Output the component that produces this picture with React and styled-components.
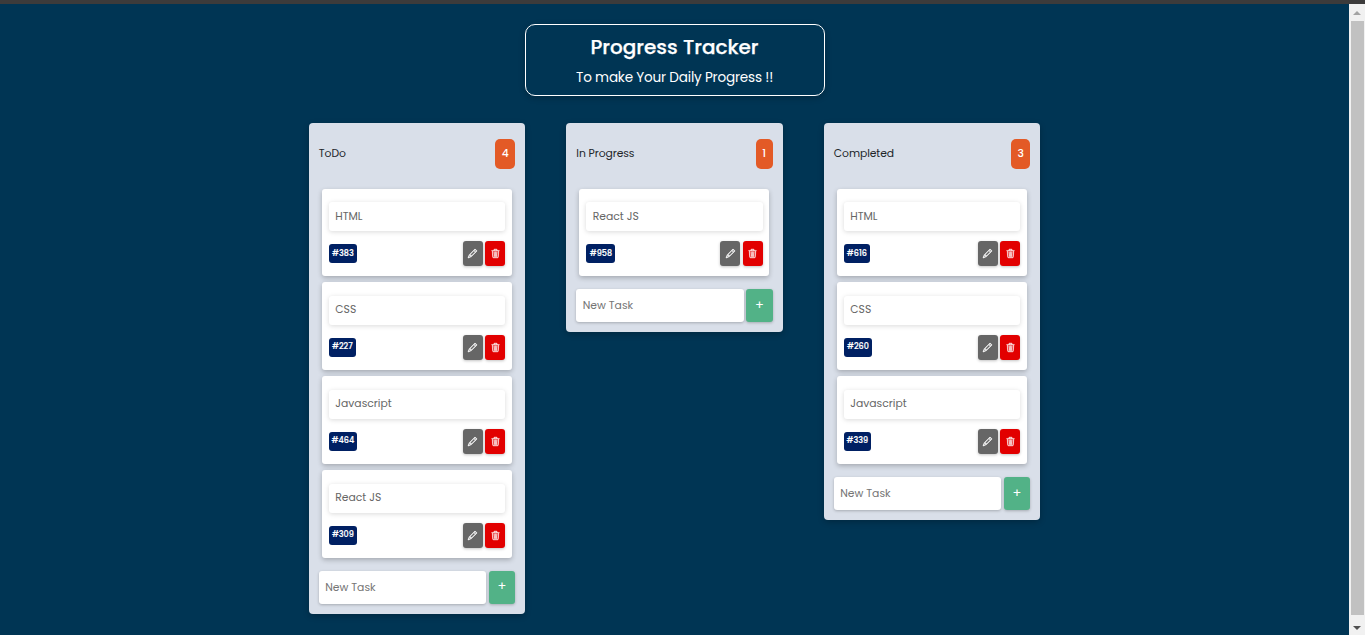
import React from "react";
import styled, { createGlobalStyle } from "styled-components";
import { BsPencil, BsTrash3 } from "react-icons/bs";

const GlobalStyle = createGlobalStyle`
  * { box-sizing: border-box; }
  html, body { margin: 0; padding: 0; overflow: hidden; background: #003554; }
  body, input, button { font-family: Poppins, Inter, "Open Sans", sans-serif; }
`;

const Screen = styled.div`
  height: 635px;
  display: flex;
  flex-direction: column;
  overflow: hidden;
  background: #003554;
`;

const TopEdge = styled.div`
  height: 4px;
  flex: none;
  background: #3c3b3b;
`;

const Viewport = styled.div`
  flex: 1;
  min-height: 0;
  display: flex;
`;

const Page = styled.main`
  flex: 1;
  display: flex;
  flex-direction: column;
  align-items: center;
  padding-top: 20px;
`;

const Header = styled.header`
  width: 300px;
  height: 72px;
  flex: none;
  margin-left: 1px;
  border: 1px solid #fff;
  border-radius: 10px;
  box-shadow: 0 2px 6px rgba(0, 0, 0, 0.24);
  color: #fff;
  text-align: center;
`;

const Title = styled.h1`
  margin: 7px 0 0;
  padding-right: 1px;
  font-size: 20px;
  line-height: 30px;
  font-weight: 500;
  -webkit-text-stroke: 0.25px currentColor;
  white-space: nowrap;
`;

const Subtitle = styled.p`
  margin: 5px 0 0;
  padding-right: 1px;
  font-size: 13.6px;
  line-height: 22px;
  letter-spacing: -0.2px;
  white-space: nowrap;
`;

const Board = styled.section`
  display: grid;
  grid-template-columns: repeat(3, 216.3px);
  column-gap: 41.2px;
  align-items: start;
  margin-top: 27px;
`;

const Column = styled.section`
  background: #d9dfe9;
  border-radius: 4px;
  padding: 16px 10px 10px;
  box-shadow: 0 2px 6px rgba(0, 0, 0, 0.24);
`;

const ColumnHead = styled.div`
  height: 30px;
  display: flex;
  align-items: center;
  justify-content: space-between;
  margin-bottom: 19.6px;
`;

const ColumnName = styled.h2`
  margin: 0;
  font-size: 10.8px;
  line-height: 16px;
  font-weight: 400;
  letter-spacing: -0.08px;
  color: #212529;
`;

const Count = styled.span`
  width: ${(p) => p.$width}px;
  height: 30px;
  display: flex;
  align-items: center;
  justify-content: center;
  padding-bottom: 1px;
  border-radius: 5px;
  background: #e35a26;
  color: #fff;
  font-size: 10.8px;
  line-height: 16px;
  font-weight: 500;
`;

const CardList = styled.div`
  display: grid;
  row-gap: 6.1px;
  padding: 0 3.2px 0 3px;
`;

const Card = styled.article`
  height: 87.7px;
  padding: 13.6px 6.8px 0 7px;
  border-radius: 3px;
  background: #fff;
  box-shadow: 0 2px 5px rgba(0, 0, 0, 0.24);
`;

const TaskName = styled.div`
  height: 29.3px;
  display: flex;
  align-items: center;
  padding: 0 6.4px 0.6px;
  border-radius: 3px;
  background: #fff;
  color: #666;
  font-size: 10.8px;
  line-height: 16px;
  box-shadow: 0 1px 5px rgba(0, 0, 0, 0.15);
`;

const CardFoot = styled.div`
  display: flex;
  align-items: center;
  justify-content: space-between;
  margin-top: 9.7px;
  height: 25px;
`;

const Tag = styled.span`
  width: ${(p) => p.$width}px;
  height: 19px;
  display: flex;
  align-items: center;
  justify-content: center;
  border-radius: 3px;
  background: #002063;
  color: #fff;
  font-size: 8px;
  line-height: 18px;
  padding-bottom: 0.2px;
  font-weight: 500;
  -webkit-text-stroke: 0.2px currentColor;
`;

const Actions = styled.div`
  display: flex;
  gap: 2.4px;
`;

const IconButton = styled.button`
  width: 20px;
  height: 25px;
  display: flex;
  align-items: center;
  justify-content: center;
  padding: 0;
  border: 0;
  border-radius: 3px;
  background: ${(p) => (p.$danger ? "#e20000" : "#666")};
  color: #fff;
  box-shadow: 0 1px 3px rgba(0, 0, 0, 0.24);

  svg {
    stroke: currentColor;
    stroke-width: ${(p) => (p.$danger ? 0.6 : 0.8)};
    overflow: visible;
  }
`;

const AddRow = styled.form`
  display: flex;
  gap: 2.6px;
  margin-top: 13.1px;
`;

const NewTask = styled.input`
  flex: 1;
  min-width: 0;
  height: 33px;
  padding: 0.6px 6.4px 0;
  border: 0;
  border-radius: 3px;
  background: #fff;
  font-size: 10.8px;
  box-shadow: 0 1px 3px rgba(0, 0, 0, 0.24);

  &::placeholder { color: #757575; opacity: 1; }
`;

const AddButton = styled.button`
  width: 26.4px;
  height: 33px;
  padding: 0 0 1.5px;
  border: 0;
  border-radius: 3px;
  background: #52b287;
  color: #fff;
  font-size: 13px;
  font-weight: 400;
  box-shadow: 0 1px 3px rgba(0, 0, 0, 0.24);
`;

const Scrollbar = styled.div`
  width: 16px;
  display: flex;
  flex-direction: column;
  align-items: center;
  background: #f1f1f1;
`;

const ScrollArrow = styled.div`
  height: ${(p) => p.$height}px;
  padding-top: ${(p) => p.$drop}px;
  display: flex;
  align-items: center;
  justify-content: center;
  color: ${(p) => p.$color};
`;

const ScrollThumb = styled.div`
  width: 13px;
  flex: 1;
  margin-left: 1px;
  background: #c1c1c1;
`;

const columns = [
  {
    name: "ToDo",
    badge: 20,
    tasks: [
      ["HTML", 383, 28],
      ["CSS", 227, 27],
      ["Javascript", 464, 28],
      ["React JS", 309, 28],
    ],
  },
  { name: "In Progress", badge: 17, tasks: [["React JS", 958, 29]] },
  {
    name: "Completed",
    badge: 19,
    tasks: [
      ["HTML", 616, 26],
      ["CSS", 260, 28],
      ["Javascript", 339, 27],
    ],
  },
];

function TaskCard({ name, id, tagWidth }) {
  return (
    <Card>
      <TaskName>{name}</TaskName>
      <CardFoot>
        <Tag $width={tagWidth}>#{id}</Tag>
        <Actions>
          <IconButton type="button" aria-label="Edit"><BsPencil size={9} /></IconButton>
          <IconButton type="button" aria-label="Delete" $danger><BsTrash3 size={9} /></IconButton>
        </Actions>
      </CardFoot>
    </Card>
  );
}

function TaskColumn({ column }) {
  return (
    <Column>
      <ColumnHead>
        <ColumnName>{column.name}</ColumnName>
        <Count $width={column.badge}>{column.tasks.length}</Count>
      </ColumnHead>
      <CardList>
        {column.tasks.map(([name, id, width]) => (
          <TaskCard key={id} name={name} id={id} tagWidth={width} />
        ))}
      </CardList>
      <AddRow>
        <NewTask placeholder="New Task" />
        <AddButton type="button">+</AddButton>
      </AddRow>
    </Column>
  );
}

export default function App() {
  return (
    <Screen>
      <GlobalStyle />
      <TopEdge />
      <Viewport>
        <Page>
          <Header>
            <Title>Progress Tracker</Title>
            <Subtitle>To make Your Daily Progress !!</Subtitle>
          </Header>
          <Board>
            {columns.map((column) => (
              <TaskColumn key={column.name} column={column} />
            ))}
          </Board>
        </Page>
        <Scrollbar>
          <ScrollArrow $height={17} $color="#a3a3a3" $drop={1}>
            <svg width="8" height="4" viewBox="0 0 8 4"><path d="M0 4 4 0 8 4Z" fill="currentColor" /></svg>
          </ScrollArrow>
          <ScrollThumb />
          <ScrollArrow $height={20} $color="#505050" $drop={6}>
            <svg width="8" height="4" viewBox="0 0 8 4"><path d="M0 0 4 4 8 0Z" fill="currentColor" /></svg>
          </ScrollArrow>
        </Scrollbar>
      </Viewport>
    </Screen>
  );
}
